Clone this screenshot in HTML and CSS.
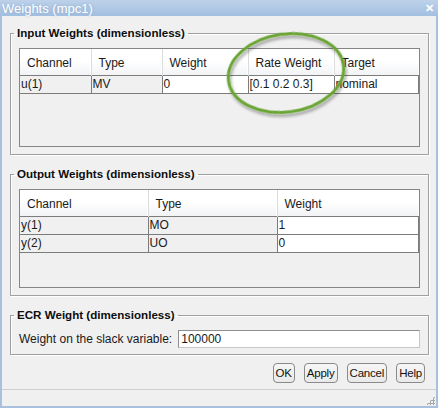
FILE: index.html
```html
<!DOCTYPE html>
<html lang="en">
<head>
<meta charset="UTF-8" />
<title>Weights (mpc1)</title>
<link rel="stylesheet" href="styles.css">
</head>
<body>
<div class="window">
  <div class="titlebar">
    <span class="title">Weights (mpc1)</span>
    <span class="close">&#x2715;</span>
  </div>

  <div class="content">
    <fieldset class="group">
      <legend>Input Weights (dimensionless)</legend>
      <div class="grid">
        <table class="input-table">
          <colgroup>
            <col style="width:71px"><col style="width:71px"><col style="width:86px"><col style="width:86px"><col>
          </colgroup>
          <thead>
            <tr><th>Channel</th><th>Type</th><th>Weight</th><th>Rate Weight</th><th>Target</th></tr>
          </thead>
          <tbody>
            <tr>
              <td class="ro">u(1)</td><td class="ro">MV</td><td>0</td><td>[0.1 0.2 0.3]</td><td>nominal</td>
            </tr>
          </tbody>
        </table>
      </div>
    </fieldset>

    <fieldset class="group">
      <legend>Output Weights (dimensionless)</legend>
      <div class="grid">
        <table class="output-table">
          <colgroup>
            <col style="width:128px"><col style="width:129px"><col>
          </colgroup>
          <thead>
            <tr><th>Channel</th><th>Type</th><th>Weight</th></tr>
          </thead>
          <tbody>
            <tr><td class="ro">y(1)</td><td class="ro">MO</td><td>1</td></tr>
            <tr><td class="ro">y(2)</td><td class="ro">UO</td><td>0</td></tr>
          </tbody>
        </table>
      </div>
    </fieldset>

    <fieldset class="group group-ecr">
      <legend>ECR Weight (dimensionless)</legend>
      <div class="ecr-row">
        <label for="slack">Weight on the slack variable:</label>
        <input id="slack" class="field" type="text" value="100000">
      </div>
    </fieldset>

    <div class="buttons">
      <button class="btn">OK</button>
      <button class="btn">Apply</button>
      <button class="btn">Cancel</button>
      <button class="btn">Help</button>
    </div>
  </div>

  <div class="statusbar"><span class="grip"></span></div>

  <!-- annotation ring drawn over the Rate Weight column -->
  <svg class="highlight" width="438" height="408" viewBox="0 0 438 408">
    <defs>
      <filter id="shadow" x="-20%" y="-20%" width="140%" height="140%">
        <feDropShadow dx="1" dy="3" stdDeviation="1.5" flood-color="#000" flood-opacity="0.35"/>
      </filter>
    </defs>
    <ellipse cx="286" cy="73" rx="58" ry="39" transform="rotate(-8 286 73)"
      fill="none" stroke="#6aa534" stroke-width="3" filter="url(#shadow)"/>
  </svg>
</div>
</body>
</html>
```

FILE: styles.css
```css
* {
  box-sizing: border-box;
}

body {
  margin: 0;
  background: #f0f0f0;
  font-family: "Liberation Sans", Arial, sans-serif;
  font-size: 12px;
  color: #1a1a1a;
}

.window {
  position: relative;
  width: 438px;
  height: 408px;
  display: flex;
  flex-direction: column;
  background: #f0f0f0;
  border-left: 2px solid #a9c1de;
  border-right: 2px solid #a9c1de;
  border-bottom: 2px solid #a9c1de;
}

/* Title bar */
.titlebar {
  height: 16px;
  margin: 0 -2px;
  padding: 0 4px 0 2px;
  display: flex;
  align-items: center;
  justify-content: space-between;
  background: linear-gradient(#bdd2ea, #a3bfe0);
  color: #fff;
}

.title {
  font-size: 13px;
  text-shadow: 0 0 3px rgba(120, 150, 190, 0.6);
}

.close {
  font-size: 11px;
  font-weight: 700;
  line-height: 1;
}

.content {
  flex: 1;
  padding: 10px 7px 0 8px;
  display: flex;
  flex-direction: column;
}

/* Group boxes */
.group {
  margin: 0 0 12px;
  padding: 8px 8px 7px;
  border: 1px solid #a0a0a0;
  box-shadow: inset 1px 1px 0 #fff, 1px 1px 0 #fff;
  min-width: 0;
}

.group legend {
  margin-left: -5px;
  padding: 0 3px;
  font-size: 11.6px;
  font-weight: 700;
  line-height: 14px;
  color: #0d0d0d;
}

.grid {
  height: 99px;
  border: 1px solid #858585;
  background: #f0f0f0;
}

table {
  width: 100%;
  border-collapse: collapse;
  table-layout: fixed;
}

th {
  height: 26px;
  padding: 2px 0 0 7px;
  text-align: left;
  font-weight: 400;
  background: linear-gradient(#ffffff 45%, #f2f3f5);
  border-right: 1px solid #dcdcdc;
  box-shadow: inset -1px 0 0 #fff;
}

th:last-child {
  border-right: none;
}

td {
  height: 18px;
  padding: 0 1px;
  background: #fff;
  border: 1px solid #7c7c7c;
  white-space: nowrap;
  overflow: hidden;
}

td.ro {
  background: #f0f0f0;
}

tr td:first-child {
  border-left: none;
}

/* ECR row */
.group-ecr {
  margin-bottom: 8px;
  padding-top: 8px;
  padding-bottom: 6px;
}

.ecr-row {
  display: flex;
  align-items: center;
  gap: 6px;
}

.ecr-row label {
  white-space: nowrap;
  flex-shrink: 0;
}

.field {
  flex: 1;
  min-width: 0;
  height: 18px;
  padding: 0 2px;
  font: inherit;
  color: #1a1a1a;
  background: #fff;
  border: 1px solid #8e8e8e;
  border-right-color: #c8c8c8;
  border-bottom-color: #c8c8c8;
}

/* Dialog buttons */
.buttons {
  display: flex;
  justify-content: flex-end;
  gap: 9px;
  padding-right: 4px;
}

.btn {
  height: 20px;
  padding: 0 2px;
  font: inherit;
  font-size: 11.5px;
  letter-spacing: -0.2px;
  color: #111;
  background: linear-gradient(#f6f6f6, #e9e9e9);
  border: 1px solid #8a8a8a;
  border-radius: 4px;
}

.statusbar {
  position: relative;
  height: 17px;
  margin-top: auto;
  border-top: 1px solid #cfcfcf;
}

.grip {
  position: absolute;
  right: 1px;
  bottom: 1px;
  width: 9px;
  height: 9px;
  background:
    radial-gradient(circle, #a8a8a8 1px, transparent 1.2px) 0 0 / 3px 3px;
  clip-path: polygon(100% 0, 100% 100%, 0 100%);
}

.highlight {
  position: absolute;
  top: 0;
  left: -2px;
  pointer-events: none;
}
```
